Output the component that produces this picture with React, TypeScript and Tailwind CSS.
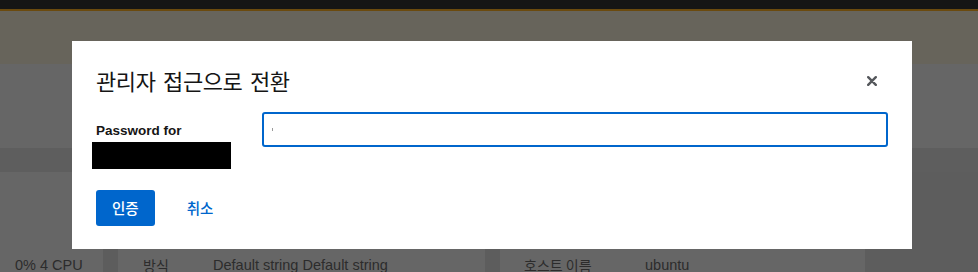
import React from 'react';

// Dimmed page behind the dialog
const PageBehind = () => (
  <div className="flex flex-col h-[272px] bg-[#5d5d5d] overflow-hidden">
    <div className="h-[9px] bg-[#151515] shrink-0" />
    <div className="h-[2px] bg-[#6b4a0e] shrink-0" />
    <div className="h-[53px] bg-[#67645b] shrink-0" />
    <div className="h-[84px] bg-[#666666] shrink-0" />
    <div className="h-[24px] bg-[#5e5e5e] shrink-0" />
    <div className="flex flex-1 gap-[15px] font-['Liberation_Sans','Noto_Sans_CJK_KR',sans-serif] text-[14.5px] leading-[20px] text-[#2c2c2c]">
      <div className="w-[103px] bg-[#666666] flex flex-col justify-end">
        <div className="pl-[15px] translate-y-[3px]">0% 4 CPU</div>
      </div>
      <div className="w-[367px] bg-[#666666] flex flex-col justify-end">
        <div className="flex translate-y-[3px]">
          <span className="pl-[25px] w-[95px] font-['Noto_Sans_CJK_KR',sans-serif] text-[14px]">방식</span>
          <span>Default string Default string</span>
        </div>
      </div>
      <div className="w-[365px] bg-[#666666] flex flex-col justify-end">
        <div className="flex translate-y-[3px]">
          <span className="pl-[24px] w-[145px] font-['Noto_Sans_CJK_KR',sans-serif] text-[14px]">호스트 이름</span>
          <span>ubuntu</span>
        </div>
      </div>
    </div>
  </div>
);

const CloseIcon = () => (
  <svg width="10" height="10" viewBox="0 0 10 10" fill="none">
    <path d="M1.2 1.2 L8.8 8.8 M8.8 1.2 L1.2 8.8" stroke="#55585c" strokeWidth="2.4" strokeLinecap="round" />
  </svg>
);

export default function App() {
  return (
    <div className="relative w-[978px] h-[272px] overflow-hidden">
      <PageBehind />

      {/* Modal */}
      <div className="absolute left-[72px] top-[41px] w-[840px] h-[208px] bg-white px-[24px] pt-[24px] pb-[23px] flex flex-col">
        <div className="relative flex items-center h-[31px]">
          <h1 className="font-['Noto_Sans_CJK_KR',sans-serif] text-[22px] leading-[31px] tracking-[-0.4px] [word-spacing:3px] text-[#151515]">
            관리자 접근으로 전환
          </h1>
          <button className="absolute right-[11px] top-[11px] w-[10px] h-[10px] flex items-center justify-center">
            <CloseIcon />
          </button>
        </div>

        <div className="flex mt-[16px] gap-[16px]">
          <div className="w-[150px] flex flex-col">
            <label className="pt-[9px] font-['Liberation_Sans',sans-serif] font-bold text-[13.5px] leading-[20px] text-[#151515]">
              Password for
            </label>
            <div className="mt-[1px] -ml-[4px] w-[139px] h-[27px] bg-black" />
          </div>
          <div className="flex-1 h-[35px] border-2 border-[#0066cc] rounded-[3px] flex items-center pl-[8px]">
            <span className="w-px h-[3px] bg-[#9a9a9a]" />
          </div>
        </div>

        <div className="flex mt-auto gap-[16px] font-['Noto_Sans_CJK_KR',sans-serif] text-[14.5px] font-medium">
          <button className="h-[36px] px-[16px] rounded-[3px] bg-[#0066cc] text-white">인증</button>
          <button className="h-[36px] px-[16px] text-[#0066cc]">취소</button>
        </div>
      </div>
    </div>
  );
}
